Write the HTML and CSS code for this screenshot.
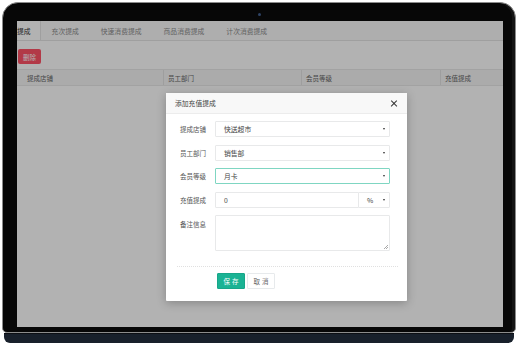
FILE: index.html
```html
<!DOCTYPE html>
<html lang="zh-CN">
<head>
  <meta charset="UTF-8">
  <meta name="viewport" content="width=device-width, initial-scale=1.0">
  <title>充值提成</title>
  <link rel="stylesheet" href="styles.css">
</head>
<body>
  <div class="laptop">
    <div class="bezel">
      <span class="camera"></span>
      <div class="screen">
        <div class="app">
          <div class="tabs">
            <div class="tab active">提成</div>
            <div class="tab">充次提成</div>
            <div class="tab">快速消费提成</div>
            <div class="tab">商品消费提成</div>
            <div class="tab">计次消费提成</div>
          </div>
          <div class="toolbar">
            <button class="btn-del">删除</button>
          </div>
          <div class="table-head">
            <div class="th first">提成店铺</div>
            <div class="th">员工部门</div>
            <div class="th">会员等级</div>
            <div class="th">充值提成</div>
          </div>
        </div>

        <div class="mask">
          <div class="dialog">
            <div class="dialog-header">添加充值提成<button class="close"></button></div>
            <div class="dialog-body">
              <div class="row">
                <label>提成店铺</label>
                <div class="select">快送超市</div>
              </div>
              <div class="row">
                <label>员工部门</label>
                <div class="select">销售部</div>
              </div>
              <div class="row">
                <label>会员等级</label>
                <div class="select focus">月卡</div>
              </div>
              <div class="row">
                <label>充值提成</label>
                <div class="input">0</div>
                <div class="select unit">%</div>
              </div>
              <div class="row top">
                <label>备注信息</label>
                <div class="textarea"></div>
              </div>
            </div>
            <div class="dialog-footer">
              <button class="btn btn-save">保存</button>
              <button class="btn btn-cancel">取消</button>
            </div>
          </div>
        </div>
      </div>
    </div>
    <div class="base"></div>
  </div>
</body>
</html>
```

FILE: styles.css
```css
  *{
    box-sizing: border-box;
  }
  body{
    margin: 0;
    background: #fff;
    font-family: "Noto Sans CJK SC", "Noto Sans", sans-serif;
  }
  .laptop{
    width: 518px;
    height: 343px;
    overflow: hidden;
  }
  .bezel{
    position: relative;
    width: 514px;
    height: 331px;
    margin: 2px 2px 0 2px;
    padding: 18px 12px 5px 14px;
    border: 1px solid #8c8c8c;
    border-radius: 16px 16px 5px 5px;
    background: #070707;
    box-shadow: inset -3px 0 0 #141414;
  }
  .camera{
    position: absolute;
    top: 10px;
    left: 255px;
    width: 3px;
    height: 3px;
    border-radius: 50%;
    background: #2f4466;
  }
  .base{
    height: 10px;
    margin: 0 4px;
    border-radius: 0 0 6px 6px;
    background: #18202b;
    border-top: 1px solid #0b0e13;
  }

  .screen{
    position: relative;
    width: 486px;
    height: 306px;
    overflow: hidden;
    background: #fff;
  }
  .tabs{
    display: flex;
    height: 20px;
    background: #fafafa;
    border-bottom: 1px solid #e4e4e4;
  }
  .tab{
    display: flex;
    align-items: center;
    padding: 0 11px;
    font-size: 6.8px;
    color: #8c8c8c;
  }
  .tab.active{
    padding: 0 9px 0 0;
    background: #fff;
    color: #333;
    border-right: 1px solid #e4e4e4;
  }
  .toolbar{
    padding: 8px 1px 0;
  }
  .btn-del{
    display: block;
    width: 23px;
    height: 15px;
    padding: 0;
    font-family: inherit;
    font-size: 6.5px;
    color: #fff;
    border: 0;
    border-radius: 2px;
    background: #ff5266;
  }
  .table-head{
    display: grid;
    grid-template-columns: 146px 138px 139px 1fr;
    height: 17px;
    margin-top: 5px;
    background: #f5f5f5;
    border-top: 1px solid #e8e8e8;
    border-bottom: 1px solid #e8e8e8;
  }
  .th{
    display: flex;
    align-items: center;
    padding-left: 4px;
    font-size: 6.5px;
    color: #666;
    border-left: 1px solid #e2e2e2;
  }
  .th.first{
    padding-left: 10px;
    border-left: 0;
  }

  .mask{
    position: absolute;
    top: 0;
    right: 0;
    bottom: 0;
    left: 0;
    padding: 72px 0 0 149px;
    background-color: rgba(0, 0, 0, 0.3);
  }
  .dialog{
    width: 241px;
    height: 208px;
    background: #fff;
    border-radius: 1px;
    box-shadow: 0 2px 10px rgba(0, 0, 0, 0.25);
  }
  .dialog-header{
    display: flex;
    align-items: center;
    height: 21px;
    padding: 0 9px;
    font-size: 6.8px;
    color: #444;
    background: #f8f8f8;
    border-bottom: 1px solid #ececec;
  }
  .dialog-header .close{
    position: relative;
    margin-left: auto;
    width: 7px;
    height: 7px;
    padding: 0;
    border: 0;
    background: none;
  }
  .dialog-header .close::before,
  .dialog-header .close::after{
    content: '';
    position: absolute;
    top: 3px;
    left: -1px;
    width: 8px;
    height: 1.2px;
    background-color: #333;
    transform: rotate(45deg);
  }
  .dialog-header .close::after{
    transform: rotate(-45deg);
  }
  .dialog-body{
    padding: 7px 17px 0 14px;
  }
  .row{
    display: flex;
    align-items: center;
    margin-bottom: 7.5px;
  }
  .row.top{
    align-items: flex-start;
    margin-bottom: 0;
  }
  .row label{
    width: 35px;
    flex: none;
    font-size: 6.5px;
    color: #555;
  }
  .row.top label{
    padding-top: 4px;
  }
  .select,
  .input{
    position: relative;
    flex: 1;
    display: flex;
    align-items: center;
    height: 16px;
    padding-left: 8px;
    font-size: 6.8px;
    color: #444;
    border: 1px solid #e8e9ea;
    border-radius: 1px;
  }
  .select::after{
    content: '';
    position: absolute;
    right: 4px;
    top: 6px;
    border-left: 1.5px solid transparent;
    border-right: 1.5px solid transparent;
    border-top: 2.5px solid #333;
  }
  .select.focus{
    border-color: #7fd6c2;
  }
  .select.unit{
    flex: none;
    width: 32px;
    margin-left: -1px;
  }
  .textarea{
    position: relative;
    flex: 1;
    height: 36px;
    border: 1px solid #e8e9ea;
    border-radius: 1px;
  }
  .textarea::after{
    content: '';
    position: absolute;
    right: 1px;
    bottom: 1px;
    width: 4px;
    height: 4px;
    background: linear-gradient(135deg, transparent 45%, #aaa 45%, #aaa 55%, transparent 55%, transparent 75%, #aaa 75%, #aaa 85%, transparent 85%);
  }
  .dialog-footer{
    display: flex;
    margin: 15px 9px 0 11px;
    padding: 6px 0 0 40px;
    border-top: 1px dotted #e0e0e0;
  }
  .btn{
    height: 16px;
    padding: 0;
    font-family: inherit;
    font-size: 6.5px;
    letter-spacing: 2px;
    text-indent: 2px;
    border-radius: 1px;
  }
  .btn-save{
    width: 28px;
    color: #fff;
    border: 1px solid #18a689;
    background-color: #1ab394;
  }
  .btn-cancel{
    width: 28px;
    margin-left: 2px;
    color: #666;
    border: 1px solid #e7eaec;
    background-color: #fff;
  }
```
